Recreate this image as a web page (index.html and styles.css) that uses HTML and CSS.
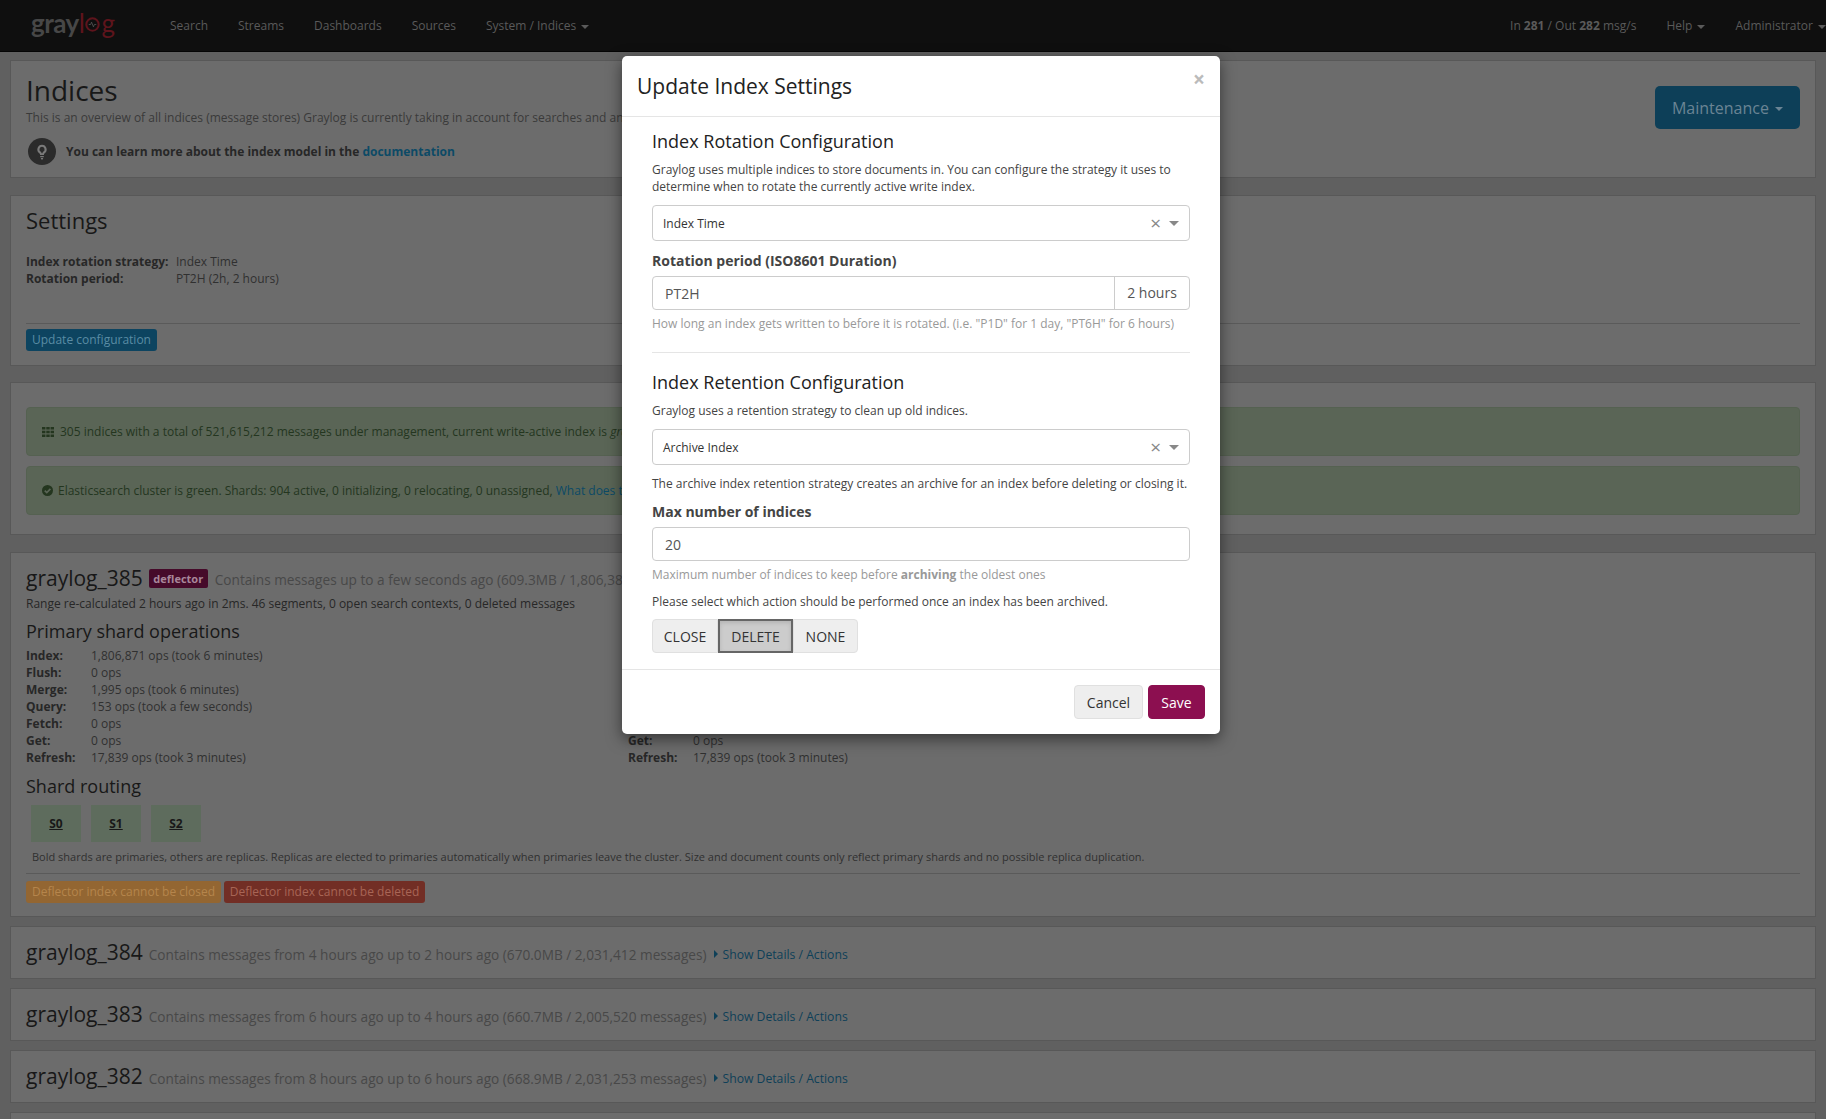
FILE: index.html
```html
<!DOCTYPE html>
<html lang="en">
<head>
<meta charset="utf-8">
<title>Graylog - Indices</title>
<link rel="stylesheet" href="styles.css">
</head>
<body>
<nav class="navbar">
  <a class="logo"><span class="logo-gray">gray</span><span class="logo-red">l<svg class="logo-o" viewBox="0 0 16 16" width="15" height="15"><circle cx="8" cy="8" r="6.6" fill="none" stroke="currentColor" stroke-width="2.200"/><path d="M4 8h2l1-2.500 2 5 1-2.500h2" fill="none" stroke="#5a5a5a" stroke-width="0.800"/></svg>g</span></a>
  <ul class="nav-left">
    <li>Search</li><li>Streams</li><li>Dashboards</li><li>Sources</li><li>System / Indices <i class="caret"></i></li>
  </ul>
  <ul class="nav-right">
    <li>In <b>281</b> / Out <b>282</b> msg/s</li><li>Help <i class="caret"></i></li><li>Administrator <i class="caret"></i></li>
  </ul>
</nav>
<main class="page">
  <section class="box box-head">
    <div class="head-main">
      <h1>Indices</h1>
      <p class="desc">This is an overview of all indices (message stores) Graylog is currently taking in account for searches and analysis.</p>
      <div class="tip">
        <span class="tip-icon"><svg viewBox="0 0 16 16" width="18" height="18"><path d="M8 1.500a4.200 4.200 0 0 0-2.400 7.600c.5.4.7 1 .7 1.600h3.400c0-.6.2-1.200.7-1.600A4.200 4.200 0 0 0 8 1.500zM8 3.400a2.300 2.300 0 0 1 1.300 4.200c-.5.4-.8.9-1 1.400h-.6c-.2-.5-.5-1-1-1.400A2.300 2.300 0 0 1 8 3.400zM6.400 11.500h3.200v1.200H6.400zM6.900 13.400h2.200L8.600 14.600H7.400z" fill="#7a7a7a"/></svg></span>
        <b>You can learn more about the index model in the <a class="link link-doc">documentation</a></b>
      </div>
    </div>
    <button class="btn-maint">Maintenance <i class="caret"></i></button>
  </section>

  <section class="box box-settings">
    <h2>Settings</h2>
    <dl class="defs defs-settings">
      <dt>Index rotation strategy:</dt><dd>Index Time</dd>
      <dt>Rotation period:</dt><dd>PT2H (2h, 2 hours)</dd>
    </dl>
    <hr class="rule rule-settings">
    <button class="btn-xs btn-blue">Update configuration</button>
  </section>

  <section class="box box-alerts">
    <div class="alert"><svg class="a-icon" viewBox="0 0 12 12" width="12" height="12"><path d="M0 1h3.400v2.600H0zM4.300 1h3.400v2.600H4.300zM8.600 1H12v2.600H8.600zM0 4.700h3.400v2.600H0zM4.300 4.700h3.400v2.600H4.300zM8.600 4.700H12v2.600H8.600zM0 8.400h3.400V11H0zM4.300 8.400h3.400V11H4.300zM8.600 8.400H12V11H8.600z" fill="currentColor"/></svg><span class="alert-text">305 indices with a total of 521,615,212 messages under management, current write-active index is <i>graylog_385</i>.</span></div>
    <div class="alert"><svg class="a-icon a-check" viewBox="0 0 12 12" width="11" height="11"><circle cx="6" cy="6" r="6" fill="currentColor"/><path d="M3 6.200l2.200 2.200L9.200 4.300" fill="none" stroke="#5a6556" stroke-width="1.800"/></svg><span class="alert-text">Elasticsearch cluster is green. Shards: 904 active, 0 initializing, 0 relocating, 0 unassigned, <a class="link link-doc">What does this mean?</a></span></div>
  </section>

  <section class="box box-index">
    <div class="idx-title"><span class="idx-name">graylog_385</span><span class="badge">deflector</span><span class="idx-sub">Contains messages up to a few seconds ago (609.3MB / 1,806,388 messages)</span></div>
    <p class="range">Range re-calculated 2 hours ago in 2ms. 46 segments, 0 open search contexts, 0 deleted messages</p>
    <div class="ops-grid">
      <div class="ops">
        <h3>Primary shard operations</h3>
        <dl class="defs defs-ops">
          <dt>Index:</dt><dd>1,806,871 ops (took 6 minutes)</dd>
          <dt>Flush:</dt><dd>0 ops</dd>
          <dt>Merge:</dt><dd>1,995 ops (took 6 minutes)</dd>
          <dt>Query:</dt><dd>153 ops (took a few seconds)</dd>
          <dt>Fetch:</dt><dd>0 ops</dd>
          <dt>Get:</dt><dd>0 ops</dd>
          <dt>Refresh:</dt><dd>17,839 ops (took 3 minutes)</dd>
        </dl>
      </div>
      <div class="ops">
        <h3 class="covered">Total shard operations</h3>
        <dl class="defs defs-ops">
          <dt class="covered">Index:</dt><dd class="covered">1,806,871 ops (took 6 minutes)</dd>
          <dt class="covered">Flush:</dt><dd class="covered">0 ops</dd>
          <dt class="covered">Merge:</dt><dd class="covered">1,995 ops (took 6 minutes)</dd>
          <dt class="covered">Query:</dt><dd class="covered">153 ops (took a few seconds)</dd>
          <dt class="covered">Fetch:</dt><dd class="covered">0 ops</dd>
          <dt>Get:</dt><dd>0 ops</dd>
          <dt>Refresh:</dt><dd>17,839 ops (took 3 minutes)</dd>
        </dl>
      </div>
    </div>
    <h3 class="routing">Shard routing</h3>
    <div class="shards"><span class="shard">S0</span><span class="shard">S1</span><span class="shard">S2</span></div>
    <p class="shard-note">Bold shards are primaries, others are replicas. Replicas are elected to primaries automatically when primaries leave the cluster. Size and document counts only reflect primary shards and no possible replica duplication.</p>
    <hr class="rule rule-index">
    <div class="idx-actions"><button class="btn-xs btn-orange">Deflector index cannot be closed</button><button class="btn-xs btn-red">Deflector index cannot be deleted</button></div>
  </section>

  <section class="box box-row"><span class="idx-name">graylog_384</span><span class="idx-sub">Contains messages from 4 hours ago up to 2 hours ago (670.0MB / 2,031,412 messages)</span><a class="link details"><i class="tri"></i>Show Details / Actions</a></section>
  <section class="box box-row"><span class="idx-name">graylog_383</span><span class="idx-sub">Contains messages from 6 hours ago up to 4 hours ago (660.7MB / 2,005,520 messages)</span><a class="link details"><i class="tri"></i>Show Details / Actions</a></section>
  <section class="box box-row"><span class="idx-name">graylog_382</span><span class="idx-sub">Contains messages from 8 hours ago up to 6 hours ago (668.9MB / 2,031,253 messages)</span><a class="link details"><i class="tri"></i>Show Details / Actions</a></section>
  <section class="box box-row"></section>
</main>

<div class="modal">
  <header class="m-head">
    <h4>Update Index Settings</h4>
    <span class="m-close">×</span>
  </header>
  <div class="m-body">
    <h5>Index Rotation Configuration</h5>
    <p class="m-text m-text-rot">Graylog uses multiple indices to store documents in. You can configure the strategy it uses to determine when to rotate the currently active write index.</p>
    <div class="select"><span>Index Time</span><span class="sel-x">×</span><i class="sel-arrow"></i></div>
    <label class="m-label">Rotation period (ISO8601 Duration)</label>
    <div class="input-group"><span class="input">PT2H</span><span class="addon">2 hours</span></div>
    <p class="help">How long an index gets written to before it is rotated. (i.e. "P1D" for 1 day, "PT6H" for 6 hours)</p>
    <hr class="m-rule">
    <h5>Index Retention Configuration</h5>
    <p class="m-text m-text-ret">Graylog uses a retention strategy to clean up old indices.</p>
    <div class="select"><span>Archive Index</span><span class="sel-x">×</span><i class="sel-arrow"></i></div>
    <p class="m-text m-text-arch">The archive index retention strategy creates an archive for an index before deleting or closing it.</p>
    <label class="m-label">Max number of indices</label>
    <div class="input-group"><span class="input">20</span></div>
    <p class="help">Maximum number of indices to keep before <b>archiving</b> the oldest ones</p>
    <p class="m-text m-text-action">Please select which action should be performed once an index has been archived.</p>
    <div class="btn-group"><button class="seg">CLOSE</button><button class="seg seg-active">DELETE</button><button class="seg">NONE</button></div>
  </div>
  <footer class="m-foot"><button class="btn-foot">Cancel</button><button class="btn-foot btn-save">Save</button></footer>
</div>
</body>
</html>
```
FILE: styles.css
```css
* { box-sizing: border-box; }
html, body { margin: 0; height: 100%; overflow: hidden; }
body { background: #606060; color: #272727; font: 12px/17px "Open Sans", sans-serif; }
h1, h2, h3, h4, h5, p, ul, dl, dd { margin: 0; padding: 0; font-weight: 400; }
ul { list-style: none; }
button { font-family: inherit; cursor: default; }
.covered { visibility: hidden; }
.caret { display: inline-block; width: 0; height: 0; margin-left: 2px; vertical-align: middle; border-top: 4px solid currentColor; border-left: 4px solid transparent; border-right: 4px solid transparent; }
.link { color: #0e4058; }
.link-doc { color: #0c4a66; }

.navbar { height: 52px; background: #0f0f0f; border-bottom: 1px solid #050505; display: flex; align-items: center; color: #5a5a5a; padding-left: 31px; }
.logo { width: 139px; font: 400 26px/30px "Lato", sans-serif; letter-spacing: -0.5px; display: flex; margin-top: -6px; }
.logo-gray { color: #474747; font-weight: 700; }
.logo-red { color: #5e141c; display: inline-flex; align-items: center; }
.logo-o { margin: 4px 1px 0 1px; }
.nav-left, .nav-right { display: flex; font-size: 12px; }
.nav-left { gap: 30px; }
.nav-right { margin-left: auto; gap: 30px; }

.page { padding: 8px 10px 0 10px; display: flex; flex-direction: column; }
.box { background: #6c6c6c; border: 1px solid #585858; padding: 0 15px; }
.box-head { height: 118px; display: flex; justify-content: space-between; margin-bottom: 17px; }
h1 { font-size: 28px; line-height: 34px; margin-top: 12px; color: #181818; }
.desc { margin-top: 2px; color: #3a3a3a; }
.tip { display: flex; align-items: center; margin: 12px 0 0 2px; gap: 10px; font-size: 12px; }
.tip-icon { width: 28px; height: 27px; border-radius: 50%; background: #2b2b2b; display: flex; align-items: center; justify-content: center; }
.btn-maint { align-self: flex-start; margin-top: 25px; width: 145px; height: 43px; border: 0; border-radius: 5px; background: #0d3f58; color: #6a8494; font-size: 16px; }

.box-settings { height: 171px; margin-bottom: 16px; }
h2 { font-size: 22px; line-height: 30px; margin-top: 9px; color: #181818; }
.defs { display: grid; }
dt { font-weight: 700; }
dd { color: #303030; }
.defs-settings { grid-template-columns: 150px auto; margin-top: 18px; justify-content: start; }
.rule { border: 0; border-top: 1px solid #5a5a5a; margin: 0; }
.rule-settings { margin-top: 36px; }
.btn-xs { border: 0; height: 22px; border-radius: 3px; padding: 0; font-size: 12px; line-height: 22px; white-space: nowrap; }
.btn-blue { background: #0d4460; color: #5a8ca4; margin-top: 5px; width: 131px; }

.box-alerts { height: 153px; padding-top: 24px; margin-bottom: 17px; display: flex; flex-direction: column; gap: 10px; }
.alert { height: 49px; background: #5a6556; border: 1px solid #556151; border-radius: 4px; color: #24361f; padding-left: 15px; display: flex; align-items: center; }
.alert-text { white-space: nowrap; }
.alert i { font-style: italic; }
.a-icon { margin-right: 6px; flex: none; }
.a-check { margin-right: 5px; }

.box-index { height: 365px; margin-bottom: 9px; }
.idx-title { display: flex; align-items: center; margin-top: 11px; height: 28px; }
.idx-name { font-size: 21px; line-height: 28px; color: #181818; }
.badge { background: #460a2a; color: #a8869a; font-size: 11px; font-weight: 700; line-height: 19px; height: 19px; width: 59px; text-align: center; border-radius: 2px; margin: 0 7px 0 6px; }
.idx-sub { color: #484848; font-size: 13.65px; margin-left: 6px; }
.badge + .idx-sub { margin-left: 0; margin-top: 2px; }
.range { margin-top: 3px; }
.ops-grid { display: grid; grid-template-columns: 602px auto; margin-top: 7px; }
h3 { font-size: 18px; line-height: 24px; color: #181818; }
.defs-ops { grid-template-columns: 65px auto; justify-content: start; margin-top: 4px; }
.routing { margin-top: 8px; }
.shards { display: flex; gap: 10px; margin: 7px 0 0 5px; }
.shard { width: 50px; height: 37px; background: #5e6c5d; text-align: center; line-height: 37px; font-weight: 700; text-decoration: underline; color: #181818; }
.shard-note { font-size: 11px; margin: 6px 0 0 6px; color: #303030; }
.rule-index { margin-top: 8px; }
.idx-actions { display: flex; gap: 3px; margin-top: 7px; }
.btn-orange { background: #936632; color: #b5854c; width: 195px; }
.btn-red { background: #722e25; color: #a86555; width: 201px; }

.box-row { height: 53px; margin-bottom: 9px; display: flex; align-items: center; flex: none; }
.box-row .idx-name { margin-bottom: 2px; }
.box-row .idx-sub { margin-top: 3px; }
.details { margin: 3px 0 0 8px; display: flex; align-items: center; font-size: 12.2px; }
.tri { width: 0; height: 0; border-left: 4px solid currentColor; border-top: 4px solid transparent; border-bottom: 4px solid transparent; margin-right: 4px; }

.modal { position: absolute; left: 622px; top: 56px; width: 598px; height: 678px; background: #fff; border-radius: 5px; box-shadow: 0 5px 15px rgba(0,0,0,.5); display: flex; flex-direction: column; }
.m-head { height: 61px; border-bottom: 1px solid #e5e5e5; padding: 0 15px; display: flex; align-items: center; justify-content: space-between; position: relative; }
h4 { font-size: 21px; line-height: 30px; color: #222; margin-top: -1px; }
.m-close { position: absolute; right: 15px; top: 13px; font-size: 21px; font-weight: 700; line-height: 21px; color: #bbb; }
.m-body { padding: 12px 30px 0; flex: 1; }
h5 { font-size: 18px; line-height: 24px; color: #222; }
.m-text { color: #444; }
.m-text-rot { margin-top: 8px; }
.select { height: 36px; border: 1px solid #ccc; border-radius: 4px; margin-top: 10px; display: flex; align-items: center; padding: 0 10px; color: #333; position: relative; }
.sel-x { margin-left: auto; font-size: 19px; color: #888; margin-right: 8px; }
.sel-arrow { border-top: 5px solid #888; border-left: 5px solid transparent; border-right: 5px solid transparent; }
.m-label { display: block; font-size: 14px; font-weight: 700; color: #444; line-height: 20px; margin-top: 10px; }
.input-group { display: flex; height: 34px; border: 1px solid #ccc; border-radius: 4px; margin-top: 5px; font-size: 14px; color: #555; }
.input { flex: 1; padding: 0 12px; line-height: 33px; }
.addon { width: 75px; border-left: 1px solid #ccc; text-align: center; line-height: 32px; }
.help { color: #999; margin-top: 5px; }
.m-rule { border: 0; border-top: 1px solid #e5e5e5; margin: 20px 0 0; }
.m-rule + h5 { margin-top: 17px; }
.m-text-ret { margin-top: 8px; }
.m-text-arch { margin-top: 10px; }
.m-text-action { margin-top: 10px; }
.btn-group { display: flex; margin-top: 9px; height: 34px; }
.seg { border: 1px solid #e0e0e0; background: #eee; color: #333; font-size: 14px; padding: 0; width: 66px; border-radius: 0; }
.seg:first-child { border-radius: 4px 0 0 4px; }
.seg:last-child { border-radius: 0 4px 4px 0; width: 65px; }
.seg-active { width: 75px; background: #ccc; border: 2px solid #666; box-shadow: inset 0 2px 4px rgba(0,0,0,.12); }
.m-foot { height: 65px; border-top: 1px solid #e5e5e5; display: flex; justify-content: flex-end; align-items: center; gap: 5px; padding: 0 15px; }
.btn-foot { height: 34px; border: 1px solid #e0e0e0; background: #eee; color: #333; font-size: 14px; border-radius: 4px; width: 69px; padding: 0; }
.btn-save { width: 57px; background: #8c0f50; border-color: #8c0f50; color: #fff; }
```
